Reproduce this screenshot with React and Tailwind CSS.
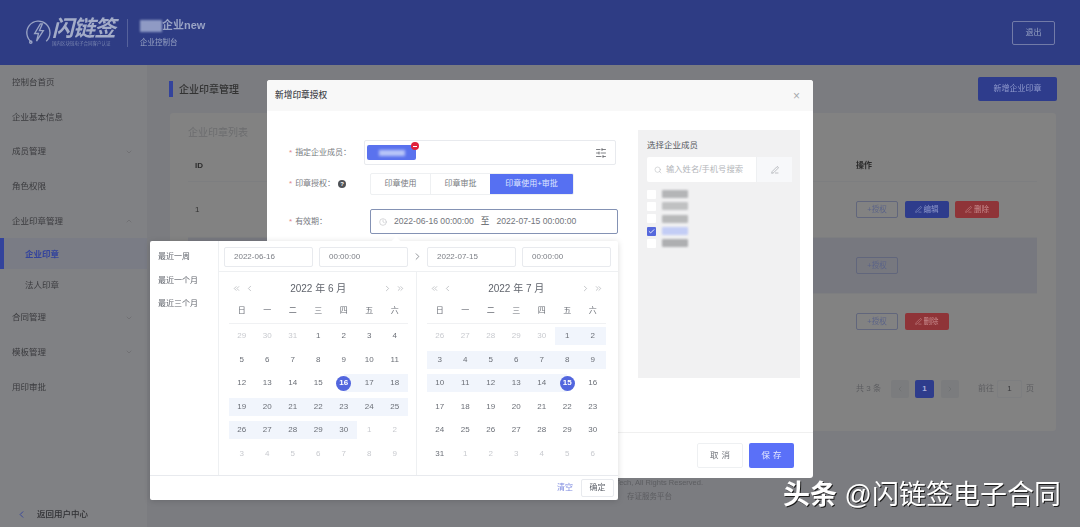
import { Check, ChevronDown, ChevronLeft, ChevronRight, ChevronUp, ChevronsLeft, ChevronsRight, Clock, PenLine, Search, SlidersHorizontal } from 'lucide-react'

const menu = [
  { label: '控制台首页' },
  { label: '企业基本信息' },
  { label: '成员管理', arrow: 'down' },
  { label: '角色权限' },
  { label: '企业印章管理', arrow: 'up' },
  { label: '企业印章', sub: true, active: true },
  { label: '法人印章', sub: true },
  { label: '合同管理', arrow: 'down' },
  { label: '模板管理', arrow: 'down' },
  { label: '用印审批' },
]

const weekDays = ['日', '一', '二', '三', '四', '五', '六']

// state per cell: m = muted, r = in range, s = range start, e = range end
const june = [
  [[29, 'm'], [30, 'm'], [31, 'm'], [1], [2], [3], [4]],
  [[5], [6], [7], [8], [9], [10], [11]],
  [[12], [13], [14], [15], [16, 's'], [17, 'r'], [18, 'r']],
  [[19, 'r'], [20, 'r'], [21, 'r'], [22, 'r'], [23, 'r'], [24, 'r'], [25, 'r']],
  [[26, 'r'], [27, 'r'], [28, 'r'], [29, 'r'], [30, 'r'], [1, 'm'], [2, 'm']],
  [[3, 'm'], [4, 'm'], [5, 'm'], [6, 'm'], [7, 'm'], [8, 'm'], [9, 'm']],
]

const july = [
  [[26, 'm'], [27, 'm'], [28, 'm'], [29, 'm'], [30, 'm'], [1, 'r'], [2, 'r']],
  [[3, 'r'], [4, 'r'], [5, 'r'], [6, 'r'], [7, 'r'], [8, 'r'], [9, 'r']],
  [[10, 'r'], [11, 'r'], [12, 'r'], [13, 'r'], [14, 'r'], [15, 'e'], [16]],
  [[17], [18], [19], [20], [21], [22], [23]],
  [[24], [25], [26], [27], [28], [29], [30]],
  [[31], [1, 'm'], [2, 'm'], [3, 'm'], [4, 'm'], [5, 'm'], [6, 'm']],
]

function DayCell({ day, state }) {
  return (
    <div className={`relative flex h-[18px] items-center justify-center ${state === 'r' ? 'bg-[#f1f5fc]' : ''} ${state === 's' ? 'bg-[linear-gradient(to_right,transparent_50%,#f1f5fc_50%)]' : ''} ${state === 'e' ? 'bg-[linear-gradient(to_right,#f1f5fc_50%,transparent_50%)]' : ''}`}>
      {state === 's' || state === 'e' ? (
        <span className="flex h-[15px] w-[15px] items-center justify-center rounded-full bg-[#5266de] font-bold text-white">{day}</span>
      ) : (
        <span className={state === 'm' ? 'text-[#c8cacf]' : 'text-[#6b6f77]'}>{day}</span>
      )}
    </div>
  )
}

function Calendar({ title, rows, className }) {
  return (
    <div className={`h-full pl-[10px] ${className}`}>
      <div className="flex h-[32px] w-[178.5px] items-center justify-between px-[3px] text-[#9a9da3]">
        <div className="flex items-center gap-[4px]">
          <ChevronsLeft size={9} strokeWidth={1.5} />
          <ChevronLeft size={9} strokeWidth={1.5} />
        </div>
        <div className="text-[10px] text-[#60646c]">{title}</div>
        <div className="flex items-center gap-[4px]">
          <ChevronRight size={9} strokeWidth={1.5} />
          <ChevronsRight size={9} strokeWidth={1.5} />
        </div>
      </div>
      <div className="grid w-[178.5px] grid-cols-7 border-b border-[#f0f1f3] pb-[5px] text-[8px] text-[#6b6f77]">
        {weekDays.map((day) => (
          <div key={day} className="flex h-[14px] items-center justify-center">{day}</div>
        ))}
      </div>
      <div className="mt-[3px] grid w-[178.5px] grid-cols-7 gap-y-[5.5px] text-[8px]">
        {rows.flat().map(([day, state], i) => (
          <DayCell key={i} day={day} state={state} />
        ))}
      </div>
    </div>
  )
}

function DateField({ value, width }) {
  return (
    <div className={`flex h-[20px] items-center rounded-[2px] border border-[#e8eaee] pl-[9px] text-[8px] text-[#7b7e85] ${width}`}>{value}</div>
  )
}

function DatePicker() {
  return (
    <div className="absolute left-[150px] top-[241px] flex h-[259px] w-[468px] flex-col rounded-[2px] bg-white text-[#60646c] shadow-[0_1px_6px_rgba(0,0,0,0.15)]">
      <div className="absolute left-[243px] top-[-3px] h-[6px] w-[6px] rotate-45 bg-white" />
      <div className="flex min-h-0 flex-1">
        <div className="flex w-[69px] shrink-0 flex-col gap-[11.7px] border-r border-[#eef0f2] pl-[8px] pt-[10px] text-[8px] leading-[12px]">
          <div>最近一周</div>
          <div>最近一个月</div>
          <div>最近三个月</div>
        </div>
        <div className="flex min-w-0 flex-1 flex-col">
          <div className="flex h-[31px] shrink-0 items-center border-b border-[#eef0f2] pl-[5px] pt-[1px]">
            <DateField value="2022-06-16" width="w-[89px]" />
            <DateField value="00:00:00" width="ml-[6px] w-[89px]" />
            <div className="flex w-[19px] justify-center text-[#60646c]"><ChevronRight size={11} strokeWidth={1.5} /></div>
            <DateField value="2022-07-15" width="w-[89px]" />
            <DateField value="00:00:00" width="ml-[6px] w-[89px]" />
          </div>
          <div className="flex min-h-0 flex-1">
            <Calendar title="2022 年 6 月" rows={june} className="w-[198px] border-r border-[#eef0f2]" />
            <Calendar title="2022 年 7 月" rows={july} className="w-[201px]" />
          </div>
        </div>
      </div>
      <div className="flex h-[25px] shrink-0 items-center justify-end gap-[8px] border-t border-[#e8eaee] pr-[4px] text-[8px]">
        <span className="text-[#7f8ce0]">清空</span>
        <span className="flex h-[18px] w-[33px] items-center justify-center rounded-[2px] border border-[#e8eaee] text-[#60646c]">确定</span>
      </div>
    </div>
  )
}

function FormLabel({ text, help, width }) {
  return (
    <div className={`flex shrink-0 items-center text-[8px] text-[#777a80] ${width}`}>
      <span className="mr-[3px] text-[#e2878a]">*</span>
      <span>{text}</span>
      {help && <span className="ml-[3px] flex h-[8px] w-[8px] items-center justify-center rounded-full bg-[#4e5156] text-[6px] font-bold text-white">?</span>}
    </div>
  )
}

function MemberRow({ checked, tone }) {
  return (
    <div className="flex h-[12.3px] items-center gap-[6px]">
      <div className={`flex h-[9px] w-[9px] items-center justify-center rounded-[1px] ${checked ? 'bg-[#5568dc]' : 'bg-white'}`}>
        {checked && <Check size={7} strokeWidth={3} className="text-white" />}
      </div>
      <div className={`h-[8px] w-[26px] rounded-[1px] blur-[1px] ${tone}`} />
    </div>
  )
}

function Modal() {
  return (
    <div className="absolute left-[267px] top-[80px] flex h-[398px] w-[546px] flex-col rounded-[3px] bg-white">
      <div className="flex h-[31px] shrink-0 items-center justify-between rounded-t-[3px] bg-[#f8f8f8] pl-[8px] pr-[13px]">
        <span className="text-[8.7px] font-medium text-[#46484d]">新增印章授权</span>
        <span className="text-[12px] leading-none text-[#a8aaae]">×</span>
      </div>
      <div className="flex h-[322px] shrink-0 border-b border-[#f0f0f0]">
        <div className="w-[371px] shrink-0 pl-[22px] pt-[29px]">
          <div className="flex h-[25px]">
            <FormLabel text="指定企业成员：" width="w-[75px]" />
            <div className="relative flex w-[252px] items-center justify-between rounded-[2px] border border-[#e8eaee] pl-[2px] pr-[8px]">
              <div className="relative flex h-[15px] w-[49px] items-center justify-center rounded-[2px] bg-[#5a72ee]">
                <div className="h-[6px] w-[26px] bg-[#b9c6f8] blur-[1.5px]" />
                <div className="absolute right-[-3px] top-[-3px] flex h-[8px] w-[8px] items-center justify-center rounded-full bg-[#e0203a]">
                  <div className="h-[1px] w-[4px] bg-white" />
                </div>
              </div>
              <SlidersHorizontal size={12} strokeWidth={1.5} className="text-[#55585e]" />
            </div>
          </div>
          <div className="mt-[8px] flex h-[22px]">
            <FormLabel text="印章授权：" help width="w-[81px]" />
            <div className="flex w-[204px] overflow-hidden rounded-[2px] border border-[#eef0f2] text-[8px] text-[#777a80]">
              <div className="flex w-[60px] items-center justify-center border-r border-[#eef0f2]">印章使用</div>
              <div className="flex w-[59px] items-center justify-center">印章审批</div>
              <div className="flex flex-1 items-center justify-center bg-[#5670f2] text-[#dfe5ff]">印章使用+审批</div>
            </div>
          </div>
          <div className="mt-[14px] flex h-[25px]">
            <FormLabel text="有效期：" width="w-[81px]" />
            <div className="flex w-[248px] items-center rounded-[2px] border border-[#8492b4] pl-[8px] text-[8.6px] text-[#71747b]">
              <Clock size={8} strokeWidth={1.5} className="text-[#b4b6ba]" />
              <span className="ml-[7px]">2022-06-16 00:00:00</span>
              <span className="mx-[7px] text-[#55585e]">至</span>
              <span>2022-07-15 00:00:00</span>
            </div>
          </div>
        </div>
        <div className="mt-[19px] h-[248px] w-[162px] bg-[#f1f1f2] px-[9px] pt-[10px]">
          <div className="text-[8.5px] leading-[10px] text-[#55585e]">选择企业成员</div>
          <div className="mt-[7px] flex h-[25px] w-[145px] rounded-[2px] bg-white">
            <div className="flex flex-1 items-center gap-[4px] pl-[7px] text-[8.3px] text-[#b4b6ba]">
              <Search size={8} strokeWidth={1.5} />
              <span>输入姓名/手机号搜索</span>
            </div>
            <div className="flex w-[36px] items-center justify-center border-l border-[#eef0f2] bg-[#f7f8fa] text-[#85888e]">
              <PenLine size={8} strokeWidth={1.5} />
            </div>
          </div>
          <div className="mt-[6px]">
            <MemberRow tone="bg-[#b4b5b7]" />
            <MemberRow tone="bg-[#c0c1c2]" />
            <MemberRow tone="bg-[#b8b9ba]" />
            <MemberRow checked tone="bg-[#c3cdf5]" />
            <MemberRow tone="bg-[#aeafb1]" />
          </div>
        </div>
      </div>
      <div className="flex flex-1 items-center justify-end gap-[6px] pr-[19px] text-[8.5px] tracking-[3px]">
        <div className="flex h-[25px] w-[46px] items-center justify-center rounded-[2px] border border-[#eef0f2] pl-[3px] text-[#71747b]">取消</div>
        <div className="flex h-[25px] w-[45px] items-center justify-center rounded-[2px] bg-[#5a70f8] pl-[3px] text-[#e6eaff]">保存</div>
      </div>
    </div>
  )
}

function ActionButton({ children, tone }) {
  const tones = {
    outline: 'w-[42px] border border-[#61667c] text-[#5a6388]',
    blue: 'w-[44px] bg-[#2e3c8c] text-[#8f99cc]',
    red: 'w-[44px] bg-[#8f3438] text-[#c98c8e]',
  }
  return (
    <div className={`flex h-[17px] items-center justify-center gap-[2px] rounded-[2px] text-[7.5px] ${tones[tone]}`}>{children}</div>
  )
}

function TableRow({ id, active, children }) {
  return (
    <div className={`flex h-[56px] items-center border-t border-[#7d7e80] ${active ? 'bg-[#77787f]' : ''}`}>
      <div className="w-[668px] pl-[7px] text-[8px] text-[#333]">{id}</div>
      <div className="flex gap-[6.5px]">{children}</div>
    </div>
  )
}

export default function App() {
  return (
    <div className="relative h-[527px] w-[1080px] overflow-hidden bg-[#7b7c80] font-['Liberation_Sans','Noto_Sans_CJK_SC',sans-serif]">
      <div className="blur-[0.35px]">
        <header className="flex h-[65px] items-center justify-between bg-[#2e3c84] pl-[25px] pr-[25px]">
          <div className="flex items-center">
            <svg viewBox="0 0 28 28" className="h-[27px] w-[27px] text-[#99a3c4]" fill="none" stroke="currentColor" strokeWidth="1.4">
              <path d="M7 24a12 12 0 1 1 15-1" />
              <path d="M16 5l-6 10h4l-2 8 7-11h-4l3-7z" />
              <circle cx="6" cy="24" r="1.2" />
            </svg>
            <div className="flex flex-col">
              <span className="text-[22px] font-bold italic leading-[22px] tracking-[-1px] text-[#a3acc8]">闪链签</span>
              <span className="mt-[1px] text-[4.5px] leading-[6px] text-[#7a86b0]">国内区块链电子合同客户认证</span>
            </div>
            <div className="ml-[12px] h-[28px] w-px bg-[#56629c]" />
            <div className="ml-[12px] flex flex-col">
              <div className="flex items-center">
                <div className="h-[12px] w-[22px] bg-[#8f9ac4] blur-[1px]" />
                <span className="text-[11px] font-bold text-[#99a3c4]">企业new</span>
              </div>
              <span className="mt-[4px] text-[7.5px] leading-[10px] text-[#99a3c4]">企业控制台</span>
            </div>
          </div>
          <div className="flex h-[24px] w-[43px] items-center justify-center rounded-[2px] border border-[#727ba8] text-[8px] text-[#99a3c4]">退出</div>
        </header>

        <div className="flex h-[462px]">
          <aside className="flex w-[147px] shrink-0 flex-col bg-[#808184] text-[8.5px] text-[#3a3b3e]">
            {menu.map((item) =>
              item.sub ? (
                <div key={item.label} className={`flex h-[31px] shrink-0 items-center pl-[25px] ${item.active ? 'border-l-[4px] border-[#33439c] !pl-[21px] bg-[#7a7c85] font-bold text-[#33439c]' : ''}`}>
                  {item.label}
                </div>
              ) : (
                <div key={item.label} className="flex h-[34.7px] shrink-0 items-center justify-between pl-[12px] pr-[14px]">
                  <span>{item.label}</span>
                  {item.arrow === 'down' && <ChevronDown size={8} className="text-[#696a6d]" />}
                  {item.arrow === 'up' && <ChevronUp size={8} className="text-[#696a6d]" />}
                </div>
              )
            )}
            <div className="mt-auto flex h-[25px] items-center pl-[16px] font-medium text-[#2f3033]">
              <ChevronLeft size={11} className="mr-[10px] text-[#33439c]" />
              返回用户中心
            </div>
          </aside>

          <main className="flex min-w-0 flex-1 flex-col pl-[22px] pr-[24px]">
            <div className="flex h-[48px] shrink-0 items-start justify-between pt-[12px]">
              <div className="flex h-[24px] items-center">
                <div className="h-[16px] w-[4px] bg-[#33439c]" />
                <span className="ml-[6px] text-[10px] font-medium text-[#333]">企业印章管理</span>
              </div>
              <div className="mr-[-1px] flex h-[24px] w-[79px] items-center justify-center rounded-[2px] bg-[#2e3c8c] text-[8px] text-[#8f99cc]">新增企业印章</div>
            </div>
            <div className="ml-[1px] flex h-[318px] shrink-0 flex-col rounded-[3px] bg-[#828282] pl-[18px] pr-[19px]">
              <div className="h-[37px] pt-[14px] text-[10px] leading-[12px] text-[#6c6d6f]">企业印章列表</div>
              <div className="flex h-[31px] items-center">
                <div className="w-[668px] pl-[7px] text-[8px] font-bold text-[#2b2b2b]">ID</div>
                <div className="text-[8px] font-bold text-[#2b2b2b]">操作</div>
              </div>
              <TableRow id="1">
                <ActionButton tone="outline">+授权</ActionButton>
                <ActionButton tone="blue"><PenLine size={7} />编辑</ActionButton>
                <ActionButton tone="red"><PenLine size={7} />删除</ActionButton>
              </TableRow>
              <TableRow id="2" active>
                <ActionButton tone="outline">+授权</ActionButton>
              </TableRow>
              <TableRow id="3">
                <ActionButton tone="outline">+授权</ActionButton>
                <ActionButton tone="red"><PenLine size={7} />删除</ActionButton>
              </TableRow>
              <div className="mt-[31px] flex items-center justify-end pr-[3px] text-[8px] text-[#5c5d60]">
                <span>共 3 条</span>
                <div className="ml-[10px] flex h-[18px] w-[18px] items-center justify-center rounded-[2px] bg-[#7b7c7e] text-[#6b6c6e]"><ChevronLeft size={8} /></div>
                <div className="ml-[6px] flex h-[18px] w-[19px] items-center justify-center rounded-[2px] bg-[#2e3c8c] font-bold text-[#a9b1dc]">1</div>
                <div className="ml-[7px] flex h-[18px] w-[18px] items-center justify-center rounded-[2px] bg-[#7b7c7e] text-[#6b6c6e]"><ChevronRight size={8} /></div>
                <span className="ml-[19px]">前往</span>
                <div className="ml-[3px] flex h-[18px] w-[25px] items-center justify-center rounded-[2px] border border-[#7d7e80] text-[#3a3b3e]">1</div>
                <span className="ml-[4px]">页</span>
              </div>
            </div>
            <div className="mt-[45px] w-[534px] text-right text-[7.5px] leading-[14px] text-[#5c5d60]">
              <div>Tech, All Rights Reserved.</div>
              <div className="pr-[31px]">存证服务平台</div>
            </div>
          </main>
        </div>

        <Modal />
        <DatePicker />
      </div>

      <div className="absolute left-[783px] top-[478px] text-[27px] leading-[34px] text-white [text-shadow:1px_1px_0_#1c1c1c]">
        <span className="font-bold">头条</span> @闪链签电子合同
      </div>
    </div>
  )
}
